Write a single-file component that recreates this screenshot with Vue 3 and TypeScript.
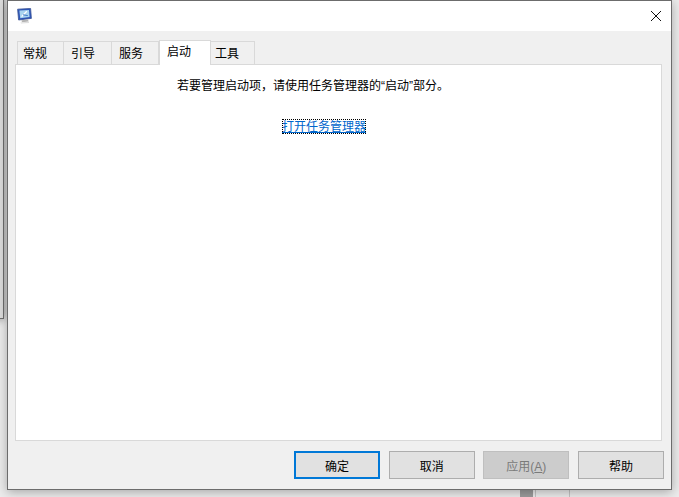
<script setup lang="ts">
interface Btn { label: string; mnemonic?: string; kind: string }
const tabs: string[] = ['常规', '引导', '服务', '启动', '工具']
const activeTab = '启动'
const buttons: Btn[] = [
  { label: '确定', kind: 'primary' },
  { label: '取消', kind: '' },
  { label: '应用', mnemonic: 'A', kind: 'disabled' },
  { label: '帮助', kind: '' },
]
</script>

<template>
  <div class="page">
    <div class="behind-window"></div>
    <div class="behind-bar"></div>
    <div class="behind-line line-a"></div>
    <div class="behind-line line-b"></div>

    <div class="window">
      <header class="titlebar">
        <svg class="app-icon" width="15" height="16" viewBox="0 0 15 16">
          <path d="M.6 1.2 L13.6 .4 L14.4 10.4 L1.6 12 Z" fill="#2c55b8" stroke="#3d5596" stroke-width=".8" />
          <path d="M2.4 2.6 L12 2.1 L12.6 9 L3.2 10.2 Z" fill="#a8d4ef" />
          <path d="M4.6 8.6 L9.8 3.2" stroke="#ffffff" stroke-width="1.3" />
          <path d="M6 6.8 L10.8 7.6" stroke="#3f78c8" stroke-width="1" />
          <path d="M4.4 12.2 L11 11.4 L11.6 13.4 L5 14.2 Z" fill="#b4b4b4" />
          <path d="M3.4 14.4 L12 13.7 L12 15 L4 15.6 Z" fill="#dedede" />
        </svg>
        <svg class="close" width="10" height="10" viewBox="0 0 10 10">
          <path d="M0 0 L10 10 M10 0 L0 10" stroke="#111" stroke-width="1" fill="none" />
        </svg>
      </header>

      <div class="body">
        <nav class="tabs">
          <div
            v-for="t in tabs"
            :key="t"
            class="tab"
            :class="[{ active: t === activeTab }, 'tab-' + tabs.indexOf(t)]"
          >{{ t }}</div>
        </nav>

        <section class="panel">
          <p class="message">若要管理启动项，请使用任务管理器的“启动”部分。</p>
          <a class="link">打开任务管理器</a>
        </section>

        <footer class="actions">
          <button
            v-for="b in buttons"
            :key="b.label"
            class="btn"
            :class="b.kind"
          >{{ b.label }}<template v-if="b.mnemonic">(<u>{{ b.mnemonic }}</u>)</template></button>
        </footer>
      </div>
    </div>
  </div>
</template>

<style>
html, body { margin: 0; padding: 0; background: #ececec; }
</style>

<style scoped>
.page {
  position: relative;
  width: 679px;
  height: 497px;
  overflow: hidden;
  background: #ececec;
  font-family: "Liberation Sans", "Noto Sans CJK SC", sans-serif;
  font-size: 12px;
  color: #000;
}
.behind-window {
  position: absolute;
  left: -20px;
  top: -10px;
  width: 22px;
  height: 327px;
  background: #dcdcdc;
  border: 1px solid #6e6e6e;
  box-shadow: 0 0 9px rgba(0, 0, 0, 0.45);
}
.behind-bar {
  position: absolute;
  left: 520px;
  top: 480px;
  width: 13px;
  height: 20px;
  background: #9c9c9c;
}
.behind-line {
  position: absolute;
  top: 480px;
  width: 1px;
  height: 20px;
  background: #c4c4c4;
}
.line-a { left: 535px; }
.line-b { left: 569px; }
.window {
  position: relative;
  box-sizing: border-box;
  width: 665px;
  height: 490px;
  margin-left: 7px;
  display: flex;
  flex-direction: column;
  border: 1px solid #6c6c6c;
  background: #f0f0f0;
  box-shadow: 0 2px 10px rgba(0, 0, 0, 0.3);
}
.titlebar {
  height: 30px;
  flex: none;
  display: flex;
  align-items: center;
  justify-content: space-between;
  background: #fff;
  padding: 0 10px 0 9px;
}
.app-icon { margin-top: -1px; }
.close { margin-top: -1px; }
.body {
  flex: 1;
  display: flex;
  flex-direction: column;
  padding: 9px 9px 0 7px;
  min-height: 0;
}
.tabs {
  height: 24px;
  flex: none;
  display: flex;
  align-items: flex-end;
  padding-left: 2px;
  position: relative;
  z-index: 1;
}
.tab {
  box-sizing: border-box;
  height: 23px;
  padding: 3px 0 0 7px;
  line-height: 18px;
  background: #f0f0f0;
  border: 1px solid #d9d9d9;
  border-left-width: 0;
  border-bottom-width: 0;
}
.tab-0 { width: 47px; border-left-width: 1px; padding-left: 5px; }
.tab-1 { width: 48px; }
.tab-2 { width: 47px; }
.tab-3 { width: 52px; }
.tab-4 { width: 44px; padding-left: 4px; }
.tab.active {
  height: 25px;
  margin-bottom: -1px;
  padding: 2px 0 0 7px;
  background: #fff;
  border-left-width: 1px;
  border-right-width: 1px;
  position: relative;
}
.panel {
  box-sizing: border-box;
  height: 377px;
  flex: none;
  background: #fff;
  border: 1px solid #d9d9d9;
  padding: 12px 0 0 161px;
  display: flex;
  flex-direction: column;
  align-items: flex-start;
}
.message {
  margin: 0;
  line-height: 18px;
}
.link {
  margin: 24px 0 0 105px;
  height: 15px;
  line-height: 17px;
  color: #0066cc;
  text-decoration: underline;
  outline: 1px dotted #000;
  outline-offset: -1px;
  cursor: pointer;
  white-space: nowrap;
}
.actions {
  flex: none;
  display: flex;
  justify-content: flex-end;
  gap: 8.67px;
  margin-top: 10px;
  margin-right: -2px;
}
.btn {
  box-sizing: border-box;
  width: 86px;
  height: 28px;
  padding: 0;
  background: #e1e1e1;
  border: 1px solid #adadad;
  font-family: inherit;
  font-size: 12px;
  color: #000;
}
.btn.primary { border: 2px solid #0078d7; }
.btn.disabled {
  background: #cccccc;
  border-color: #bfbfbf;
  color: #7a7a7a;
}
</style>
